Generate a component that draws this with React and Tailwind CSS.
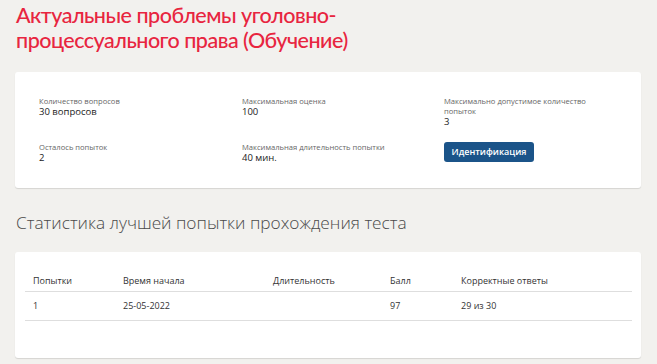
export default function App() {
  const info = [
    { label: "Количество вопросов", value: "30 вопросов" },
    { label: "Максимальная оценка", value: "100" },
    { label: "Максимально допустимое количество попыток", value: "3" },
    { label: "Осталось попыток", value: "2" },
    { label: "Максимальная длительность попытки", value: "40 мин." },
  ];

  return (
    <div className="min-h-screen bg-[#f2f1ee] px-[15px] pr-[16px] pt-[3px] pb-4 font-['Open_Sans',sans-serif]">
      <h1 className="pl-px text-[21.5px] leading-[25px] font-medium tracking-[-0.5px] text-[#e8253f] font-['Lato',sans-serif]">
        Актуальные проблемы уголовно-
        <br />
        процессуального права (Обучение)
      </h1>

      <div className="mt-[19px] h-[116px] rounded-[3px] bg-white pl-[24px] pt-[24px] shadow-[0_1px_1px_rgba(0,0,0,0.12)]">
        <div className="grid grid-cols-[203px_202px_170px] gap-y-[14px]">
          {info.map((it) => (
            <Item key={it.label} {...it} />
          ))}
          <div>
            <button className="block h-[20px] w-[90px] rounded-[3px] bg-[#1b5489] text-[9px] font-semibold text-white">
              Идентификация
            </button>
          </div>
        </div>
      </div>

      <h2 className="mt-[24px] pl-px text-[17.3px] leading-[22px] font-light text-[#4a4a4a]">
        Статистика лучшей попытки прохождения теста
      </h2>

      <div className="mt-[18px] h-[106px] rounded-[3px] bg-white px-[10px] pt-[19px] shadow-[0_1px_1px_rgba(0,0,0,0.12)]">
        <table className="w-[607px] border-collapse text-[9px] text-[#333]">
          <thead>
            <tr className="border-b border-[#dedede]">
              <th className="w-[90px] h-[20px] pl-[8px] text-left font-normal">Попытки</th>
              <th className="w-[150px] pl-[8px] text-left font-normal">Время начала</th>
              <th className="w-[117px] pl-[8px] text-left font-normal">Длительность</th>
              <th className="w-[71px] pl-[8px] text-left font-normal">Балл</th>
              <th className="pl-[8px] text-left font-normal">Корректные ответы</th>
            </tr>
          </thead>
          <tbody>
            <tr className="border-b border-[#dedede]">
              <td className="h-[29px] pl-[8px]">1</td>
              <td className="pl-[8px]">25-05-2022</td>
              <td className="pl-[8px]"></td>
              <td className="pl-[8px]">97</td>
              <td className="pl-[8px]">29 из 30</td>
            </tr>
          </tbody>
        </table>
      </div>
    </div>
  );
}

function Item({ label, value }) {
  return (
    <div>
      <div className="text-[7.6px] leading-[10px] text-[#666]">{label}</div>
      <div className="text-[9.5px] leading-[12px] text-[#222]">{value}</div>
    </div>
  );
}
